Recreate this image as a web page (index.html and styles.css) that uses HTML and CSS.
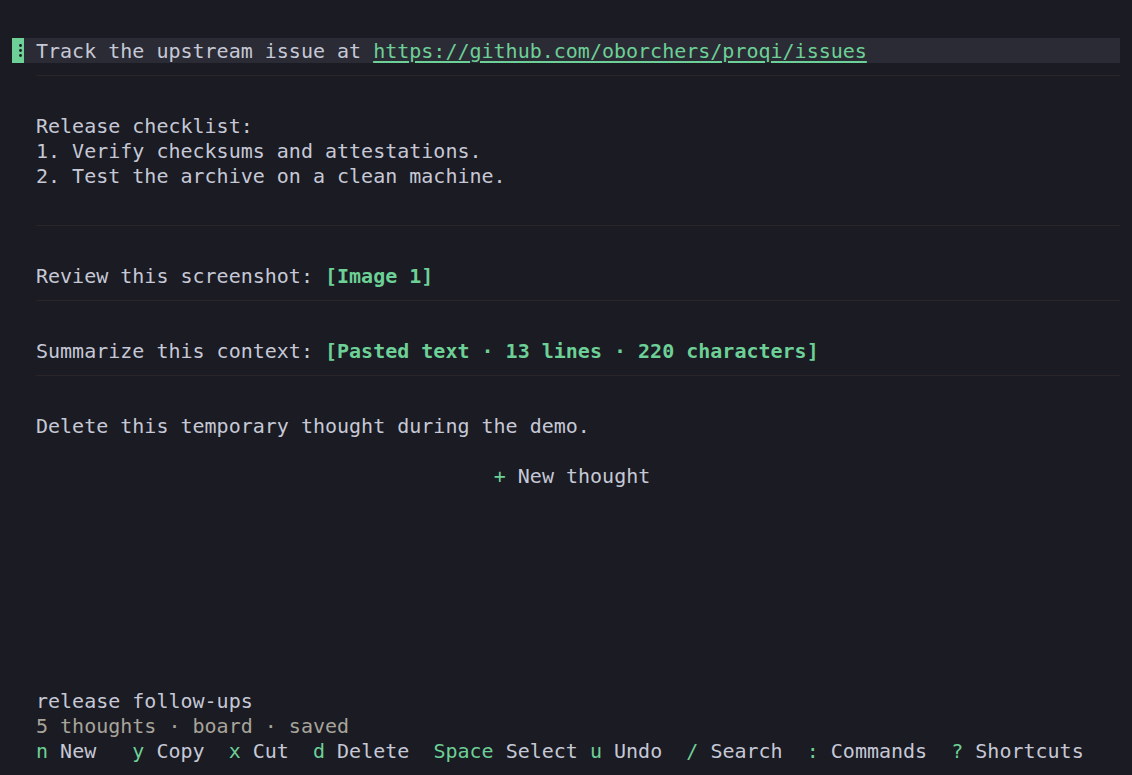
FILE: index.html
```html
<!DOCTYPE html>
<html lang="en">
<head>
<meta charset="utf-8">
<title>proqi</title>
<link rel="stylesheet" href="styles.css">
</head>
<body>
<div class="screen">
  <main class="board">
    <section class="card">
      <div class="card-row selected">
        <div class="gutter"><span class="handle"><svg class="dots" width="12" height="25" viewBox="0 0 12 25"><circle cx="8.5" cy="7.5" r="1.4"/><circle cx="8.5" cy="12.5" r="1.4"/><circle cx="8.5" cy="17.5" r="1.4"/></svg></span></div>
        <div class="content"><div class="line">Track the upstream issue at <a class="link" href="#">https://github.com/oborchers/proqi/issues</a></div></div>
      </div>
      <div class="card-foot"></div>
    </section>
    <section class="card">
      <div class="card-row">
        <div class="gutter"></div>
        <div class="content">
          <div class="line">Release checklist:</div>
          <div class="line">1. Verify checksums and attestations.</div>
          <div class="line">2. Test the archive on a clean machine.</div>
          <div class="line blank"></div>
        </div>
      </div>
      <div class="card-foot"></div>
    </section>
    <section class="card">
      <div class="card-row">
        <div class="gutter"></div>
        <div class="content"><div class="line">Review this screenshot: <span class="token">[Image 1]</span></div></div>
      </div>
      <div class="card-foot"></div>
    </section>
    <section class="card">
      <div class="card-row">
        <div class="gutter"></div>
        <div class="content"><div class="line">Summarize this context: <span class="token">[Pasted text · 13 lines · 220 characters]</span></div></div>
      </div>
      <div class="card-foot"></div>
    </section>
    <section class="card last">
      <div class="card-row">
        <div class="gutter"></div>
        <div class="content"><div class="line">Delete this temporary thought during the demo.</div></div>
      </div>
    </section>
    <div class="new-thought"><span class="key">+</span> New thought</div>
  </main>
  <footer class="status">
    <div class="line">release follow-ups</div>
    <div class="line meta">5 thoughts · board · saved</div>
    <div class="line keys"><span class="key">n</span> New   <span class="key">y</span> Copy  <span class="key">x</span> Cut  <span class="key">d</span> Delete  <span class="key">Space</span> Select <span class="key">u</span> Undo  <span class="key">/</span> Search  <span class="key">:</span> Commands  <span class="key">?</span> Shortcuts</div>
  </footer>
</div>
</body>
</html>
```
FILE: styles.css
```css
html, body {
  margin: 0;
  padding: 0;
  background: #1a1b23;
}
body {
  font-family: "DejaVu Sans Mono", "Liberation Mono", monospace;
  font-size: 20px;
  line-height: 25px;
  color: #c6c8d6;
}
.screen {
  height: 775px;
  display: flex;
  flex-direction: column;
  box-sizing: border-box;
  padding: 1px 12px 12px 12px;
}
.board {
  flex: 1;
}
.card {
  padding-top: 37px;
}
.card-row {
  display: flex;
}
.card-row.selected {
  background: #2a2b35;
}
.gutter {
  width: 24px;
  flex: none;
}
.handle {
  display: block;
  width: 12px;
  height: 25px;
  background: #6dd096;
}
.dots {
  display: block;
  fill: #1a1b23;
}
.content {
  flex: 1;
}
.line {
  height: 25px;
  padding-top: 1px;
  box-sizing: border-box;
  white-space: pre;
}
.link {
  color: #6dd096;
  text-decoration: underline;
  text-underline-offset: 3px;
}
.token {
  color: #6dd096;
  font-weight: bold;
}
.card-foot {
  margin-left: 24px;
  height: 12px;
  border-bottom: 1px solid #2a2526;
}
.new-thought {
  margin-top: 25px;
  padding-left: 12px;
  padding-top: 1px;
  text-align: center;
  white-space: pre;
}
.key {
  color: #6dd096;
}
.status {
  padding-left: 24px;
}
.meta {
  color: #a8a49a;
}
```
